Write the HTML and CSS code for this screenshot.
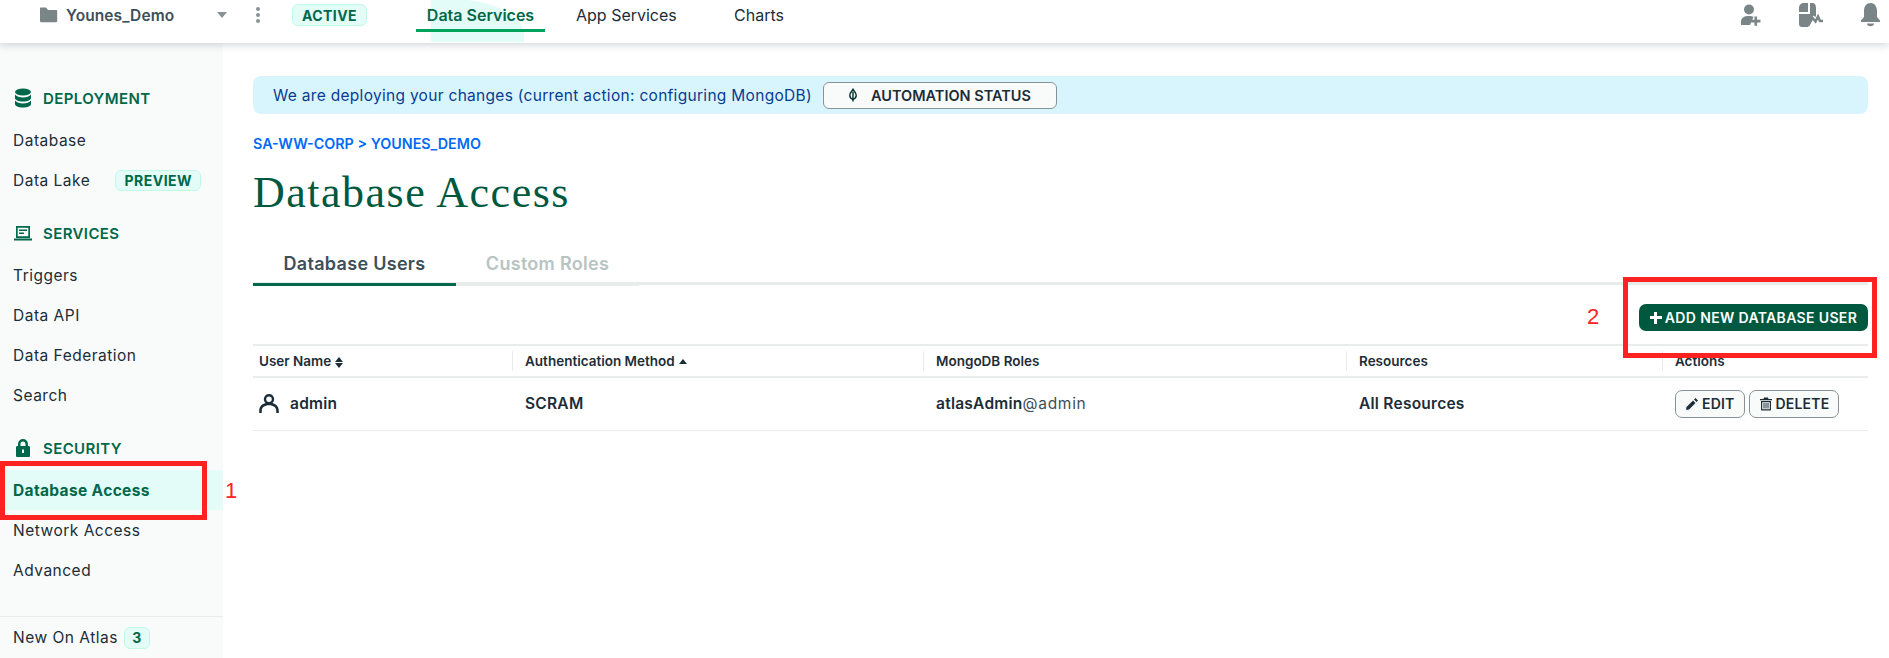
FILE: index.html
```html
<!DOCTYPE html>
<html lang="en">

<head>
    <meta charset="UTF-8">
    <title>Database Access</title>
    <link rel="stylesheet" href="styles.css">
</head>

<body>

    <header class="topbar">
        <svg class="folder" viewBox="0 0 19 16"><path d="M1 1.500C1 .9 1.400.5 2 .5h5l2 2.500h8c.7 0 1.200.5 1.200 1.200V14c0 .7-.5 1.200-1.200 1.200H2c-.6 0-1-.5-1-1.200z" /></svg>
        <span class="project">Younes_Demo</span>
        <span class="caret"></span>
        <span class="kebab"><i></i><i></i><i></i></span>
        <span class="badge badge-active">ACTIVE</span>
        <nav class="topnav">
            <a class="topnav-item topnav-current">Data Services</a>
            <a class="topnav-item topnav-app">App Services</a>
            <a class="topnav-item topnav-charts">Charts</a>
        </nav>
        <div class="topicons">
            <svg class="icon-person" viewBox="0 0 20 22"><circle cx="8" cy="5.500" r="5" /><path d="M0 21v-3.500c0-3.500 3-5.500 8-5.500 2 0 3.500.3 4.500 1L9 21z" /><path d="M13.500 12.500h2.600v3.300h3.400v2.600h-3.400v3.300h-2.600v-3.300h-3.400v-2.600h3.400z" /></svg>
            <svg class="icon-feed" viewBox="0 0 24 24"><path d="M9 0v9H0V5c0-3 2-5 5-5zM11 0h2c3 0 4 2 4 5v8l-.5 1-2-1.500-4 8-1.500 3.500H3c-2 0-3-1-3-3V11h11z" /><path class="zig" d="M9 23l4.500-8 3 3.500 2.500-5 2 4.500h3" /></svg>
            <svg class="icon-bell" viewBox="0 0 19 24"><path d="M9.500 0c4 0 6.500 3.500 6.500 8v6l3 3.500V19H0v-1.500L3 14V8c0-4.500 2.500-8 6.500-8z" /><path d="M6 20.500h7c0 1.800-1.500 2.800-3.500 2.800S6 22.300 6 20.500z" /></svg>
        </div>
    </header>

    <div class="layout">
        <aside class="sidebar">
            <div class="side-head">
                <svg viewBox="0 0 18 20"><ellipse cx="9" cy="4" rx="8" ry="3.500" /><path d="M1 6.500c1.500 2 4.500 3 8 3s6.500-1 8-3V10c0 2-3.500 3.500-8 3.500S1 12 1 10zM1 12.500c1.500 2 4.500 3 8 3s6.500-1 8-3V16c0 2-3.500 3.500-8 3.500S1 18 1 16z" /></svg>
                DEPLOYMENT
            </div>
            <a class="side-item">Database</a>
            <a class="side-item">Data Lake <span class="badge badge-preview">PREVIEW</span></a>

            <div class="side-head side-group">
                <svg viewBox="0 0 18 16"><path fill-rule="evenodd" d="M2 1h14v12H2zM3.700 2.700v8.600h10.600V2.700z" /><path d="M5 4.500h8V6H5zM5 7.500h5V9H5zM0 13.500h18V15.500H0z" /></svg>
                SERVICES
            </div>
            <a class="side-item">Triggers</a>
            <a class="side-item">Data API</a>
            <a class="side-item">Data Federation</a>
            <a class="side-item">Search</a>

            <div class="side-head side-group">
                <svg viewBox="0 0 18 20"><path fill-rule="evenodd" d="M4 8V6a5 5 0 0 1 10 0v2h.5c1 0 1.500.5 1.500 1.500v8c0 1-.5 1.500-1.500 1.500h-11C2.500 19 2 18.500 2 17.500v-8C2 8.500 2.500 8 3.500 8zM6.500 8h5V6a2.500 2.500 0 0 0-5 0zM8 11.500V15h2v-3.500z" /></svg>
                SECURITY
            </div>
            <a class="side-item side-current">Database Access</a>
            <a class="side-item">Network Access</a>
            <a class="side-item">Advanced</a>

            <div class="side-foot">New On Atlas <span class="badge badge-count">3</span></div>
        </aside>

        <main class="content">
            <div class="banner">
                We are deploying your changes (current action: configuring MongoDB)
                <button class="status-btn">
                    <svg viewBox="0 0 10 16"><path d="M5 1C6 3 9 5 9 8.500c0 2.500-1.800 4-4 5-2.200-1-4-2.500-4-5C1 5 4 3 5 1z" /><path d="M5 4v12" /></svg>
                    AUTOMATION STATUS
                </button>
            </div>

            <div class="crumbs">SA-WW-CORP &gt; YOUNES_DEMO</div>
            <h1 class="title">Database Access</h1>

            <div class="tabs">
                <a class="tab tab-current">Database Users</a>
                <a class="tab tab-off">Custom Roles</a>
            </div>

            <div class="toolbar">
                <button class="add-btn"><span class="plus"></span>ADD NEW DATABASE USER</button>
            </div>

            <table class="users">
                <colgroup>
                    <col class="col-name">
                    <col class="col-auth">
                    <col class="col-roles">
                    <col class="col-res">
                    <col class="col-act">
                </colgroup>
                <thead>
                    <tr>
                        <th><div class="th-first">User Name <span class="sort"><i class="up"></i><i class="down"></i></span></div></th>
                        <th><div class="th-in">Authentication Method <span class="sort"><i class="up"></i></span></div></th>
                        <th><div class="th-in">MongoDB Roles</div></th>
                        <th><div class="th-in">Resources</div></th>
                        <th><div class="th-in">Actions</div></th>
                    </tr>
                </thead>
                <tbody>
                    <tr>
                        <td>
                            <div class="user-cell">
                                <svg viewBox="1.500 1.500 17 16.500"><path d="M10 1.500a4.500 4.500 0 0 1 3 7.800c3 .8 5.500 3 5.500 6.700v2h-2.200v-2c0-2.800-2.500-4.800-6.300-4.800s-6.300 2-6.300 4.800v2H1.500v-2c0-3.700 2.500-5.900 5.500-6.700a4.500 4.500 0 0 1 3-7.800zm0 2.200a2.400 2.400 0 1 0 0 4.800 2.400 2.400 0 0 0 0-4.800z" /></svg>
                                admin
                            </div>
                        </td>
                        <td class="cell">SCRAM</td>
                        <td class="cell">atlasAdmin<span class="thin">@admin</span></td>
                        <td class="cell">All Resources</td>
                        <td class="cell">
                            <div class="row-btns">
                                <button class="row-btn">
                                    <svg viewBox="0 0 14 14"><path d="M10.500 1l2.500 2.500-1.500 1.500L9 2.500zM8 3.500L10.500 6 4 12.500 1 13l.5-3z" /></svg>
                                    EDIT
                                </button>
                                <button class="row-btn">
                                    <svg viewBox="0 0 12 14"><path fill-rule="evenodd" d="M4 .5h4L8.500 2H12v1.300H0V2h3.500zM1 4h10v8.500c0 .6-.4 1-1 1H2c-.6 0-1-.4-1-1zm1.200 1.200v7.100h7.600V5.200zM3.500 6h1v5.500h-1zM5.500 6h1v5.500h-1zM7.500 6h1v5.500h-1z" /></svg>
                                    DELETE
                                </button>
                            </div>
                        </td>
                    </tr>
                </tbody>
            </table>
        </main>
    </div>

    <!-- anotaciones rojas -->
    <div class="mark mark-one"></div>
    <span class="mark-num num-one">1</span>
    <div class="mark mark-two"></div>
    <span class="mark-num num-two">2</span>

</body>

</html>
```

FILE: styles.css
```css
* {
    box-sizing: border-box;
}

html,
body {
    height: 100%;
}

body {
    margin: 0;
    overflow: hidden;
    font-family: "Inter", "Liberation Sans", sans-serif;
    font-size: 15px;
    color: #1c2d38;
    background: white;
}

.topbar {
    position: relative;
    z-index: 1;
    display: flex;
    align-items: center;
    height: 43px;
    padding-left: 39px;
    padding-bottom: 13px;
    background: white;
    box-shadow: 0 2px 8px rgba(0, 30, 43, 0.18);
}

.folder {
    width: 19px;
    height: 16px;
    fill: #7a8588;
}

.project {
    width: 151px;
    margin-left: 8px;
    font-size: 15.500px;
    font-weight: 600;
    letter-spacing: 0.1px;
    color: #3d4f58;
}

.caret {
    width: 0;
    height: 0;
    border-left: 5px solid transparent;
    border-right: 5px solid transparent;
    border-top: 6px solid #889397;
}

.kebab {
    display: flex;
    flex-direction: column;
    gap: 2px;
    margin-left: 29px;
}

.kebab i {
    width: 4px;
    height: 4px;
    border-radius: 50%;
    background: #889397;
}

.badge {
    display: inline-flex;
    align-items: center;
    justify-content: center;
    font-weight: 700;
    color: #00684a;
    background: #e3fcf7;
    border: 1px solid #c0fae6;
    border-radius: 6px;
}

.badge-active {
    width: 75px;
    height: 22px;
    margin-left: 32px;
    font-size: 14px;
    letter-spacing: 0.4px;
}

.topnav {
    display: flex;
    align-items: center;
    margin-left: 49px;
}

.topnav-item {
    position: relative;
    font-size: 16px;
    color: #1c2d38;
}

.topnav-current {
    width: 129px;
    text-align: center;
    font-weight: 600;
    color: #00684a;
}

.topnav-current::before {
    content: "";
    position: absolute;
    z-index: -1;
    left: 15px;
    top: -6px;
    width: 93px;
    height: 43px;
    background: #e3fcf7;
    border-top-right-radius: 73px 36px;
}

.topnav-current::after {
    content: "";
    position: absolute;
    left: 0;
    right: 0;
    top: 24px;
    height: 3px;
    background: #00a35c;
}

.topnav-app {
    width: 158px;
    margin-left: 31px;
}

.topicons {
    display: flex;
    align-items: center;
    gap: 38px;
    margin-left: auto;
    margin-right: 9px;
}

.topicons svg {
    height: 24px;
    fill: #7a8588;
}

.topicons .icon-person {
    width: 20px;
    height: 22px;
}

.topicons .icon-feed {
    width: 24px;
}

.topicons .icon-bell {
    width: 19px;
}

.zig {
    fill: none;
    stroke: #7a8588;
    stroke-width: 2.500;
}

.layout {
    display: flex;
    height: 615px;
}

.sidebar {
    display: flex;
    flex-direction: column;
    width: 223px;
    flex-shrink: 0;
    padding-top: 33px;
    background: #f9fbfa;
}

.side-head {
    display: flex;
    align-items: center;
    gap: 11px;
    height: 44px;
    padding-left: 14px;
    font-size: 15px;
    font-weight: 600;
    letter-spacing: 0.4px;
    color: #00684a;
}

.side-head svg {
    width: 18px;
    height: 20px;
    fill: #00684a;
}

.side-group {
    margin-top: 11px;
}

.side-item {
    display: flex;
    align-items: center;
    flex-shrink: 0;
    height: 40px;
    padding-left: 13px;
    font-size: 15.500px;
    letter-spacing: 0.5px;
    color: #1c2d38;
}

.side-current {
    font-weight: 700;
    letter-spacing: 0.35px;
    color: #00684a;
    background: #e3fcf7;
}

.badge-preview {
    width: 86px;
    height: 21px;
    margin-left: 25px;
    font-size: 14px;
    letter-spacing: 0.5px;
}

.side-foot {
    display: flex;
    align-items: center;
    height: 42px;
    margin-top: auto;
    padding-left: 13px;
    font-size: 15.500px;
    letter-spacing: 0.5px;
    border-top: 1px solid #e8edeb;
}

.badge-count {
    width: 26px;
    height: 22px;
    margin-left: 6px;
    font-size: 14px;
}

.content {
    flex: 1;
    padding: 33px 21px 0 30px;
}

.banner {
    display: flex;
    align-items: center;
    height: 38px;
    padding-left: 20px;
    font-size: 15.500px;
    letter-spacing: 0.3px;
    color: #083c90;
    background: #d8f5fe;
    border-radius: 8px;
}

.status-btn {
    display: flex;
    align-items: center;
    justify-content: center;
    gap: 14px;
    width: 234px;
    height: 27px;
    margin-left: 11px;
    font-family: inherit;
    font-size: 14.500px;
    font-weight: 600;
    color: #1c2d38;
    background: #f9fbfa;
    border: 1px solid #889397;
    border-radius: 6px;
}

.status-btn svg {
    width: 8px;
    height: 14px;
    fill: none;
    stroke: #023430;
    stroke-width: 1.800;
}

.crumbs {
    height: 20px;
    margin-top: 20px;
    line-height: 20px;
    font-size: 14.300px;
    font-weight: 600;
    color: #016bf8;
}

.title {
    height: 48px;
    margin: 15px 0 0;
    line-height: 48px;
    font-family: "Liberation Serif", serif;
    font-size: 44px;
    font-weight: 400;
    letter-spacing: 1.500px;
    color: #00593f;
}

.tabs {
    display: flex;
    height: 54px;
    margin-top: 14px;
    border-bottom: 3px solid #e8edeb;
}

.tab {
    display: flex;
    align-items: center;
    justify-content: center;
    flex-shrink: 0;
    height: 55px;
    padding-top: 12px;
    font-size: 18px;
    font-weight: 600;
    letter-spacing: 0.3px;
    border-bottom: 3px solid #e8edeb;
}

.tab-current {
    width: 203px;
    color: #3d4f58;
    border-bottom-color: #00684a;
}

.tab-off {
    width: 183px;
    color: #b8c4c2;
}

.toolbar {
    display: flex;
    justify-content: flex-end;
    height: 59px;
    padding-top: 19px;
}

.add-btn {
    display: flex;
    align-items: center;
    justify-content: center;
    gap: 3px;
    width: 229px;
    height: 27px;
    padding: 0;
    font-family: inherit;
    font-size: 14px;
    font-weight: 600;
    letter-spacing: 0.35px;
    color: white;
    background: #00593f;
    border: 0;
    border-radius: 7px;
}

.plus {
    width: 12px;
    height: 12px;
    background:
        linear-gradient(white, white) center / 12px 3px no-repeat,
        linear-gradient(white, white) center / 3px 12px no-repeat;
}

.users {
    width: 100%;
    table-layout: fixed;
    border-collapse: collapse;
}

.col-name {
    width: 259px;
}

.col-auth {
    width: 411px;
}

.col-roles {
    width: 423px;
}

.col-res {
    width: 316px;
}

.users th {
    height: 32px;
    padding: 0;
    font-size: 13.500px;
    font-weight: 600;
    text-align: left;
    border-top: 2px solid #e8edeb;
    border-bottom: 2px solid #e8edeb;
}

.th-first {
    padding-left: 6px;
}

.th-in {
    display: flex;
    align-items: center;
    gap: 4px;
    height: 20px;
    padding-left: 12px;
    border-left: 1px solid #e8edeb;
}

.sort {
    display: inline-flex;
    flex-direction: column;
    gap: 1px;
    vertical-align: middle;
}

.sort i {
    width: 0;
    height: 0;
    border-left: 4px solid transparent;
    border-right: 4px solid transparent;
}

.sort .up {
    border-bottom: 5px solid #1c2d38;
}

.sort .down {
    border-top: 5px solid #1c2d38;
}

.users td {
    height: 53px;
    padding: 0;
    font-size: 15.500px;
    font-weight: 600;
    letter-spacing: 0.25px;
    border-bottom: 1px solid #e8edeb;
}

.users .cell {
    padding-left: 13px;
}

.user-cell {
    display: flex;
    align-items: center;
    gap: 11px;
    padding-left: 6px;
}

.user-cell svg {
    width: 20px;
    height: 19px;
    fill: #1c2d38;
}

.thin {
    font-weight: 400;
    letter-spacing: 0.7px;
    color: #3d4f58;
}

.row-btns {
    display: flex;
    gap: 4px;
}

.row-btn {
    display: flex;
    align-items: center;
    justify-content: center;
    gap: 3px;
    height: 28px;
    padding: 0 9px;
    font-family: inherit;
    font-size: 14px;
    font-weight: 600;
    letter-spacing: 0.2px;
    color: #1c2d38;
    background: #f9fbfa;
    border: 1px solid #889397;
    border-radius: 7px;
}

.row-btn svg {
    width: 14px;
    height: 14px;
    fill: #1c2d38;
}

.mark {
    position: absolute;
    border: 5px solid #fe2222;
}

.mark-one {
    left: 0;
    top: 461px;
    width: 207px;
    height: 59px;
}

.mark-two {
    left: 1623px;
    top: 277px;
    width: 254px;
    height: 81px;
}

.mark-num {
    position: absolute;
    font-family: "Liberation Sans", sans-serif;
    font-size: 22px;
    color: #fe2222;
}

.num-one {
    left: 225px;
    top: 478px;
}

.num-two {
    left: 1587px;
    top: 304px;
}
```
